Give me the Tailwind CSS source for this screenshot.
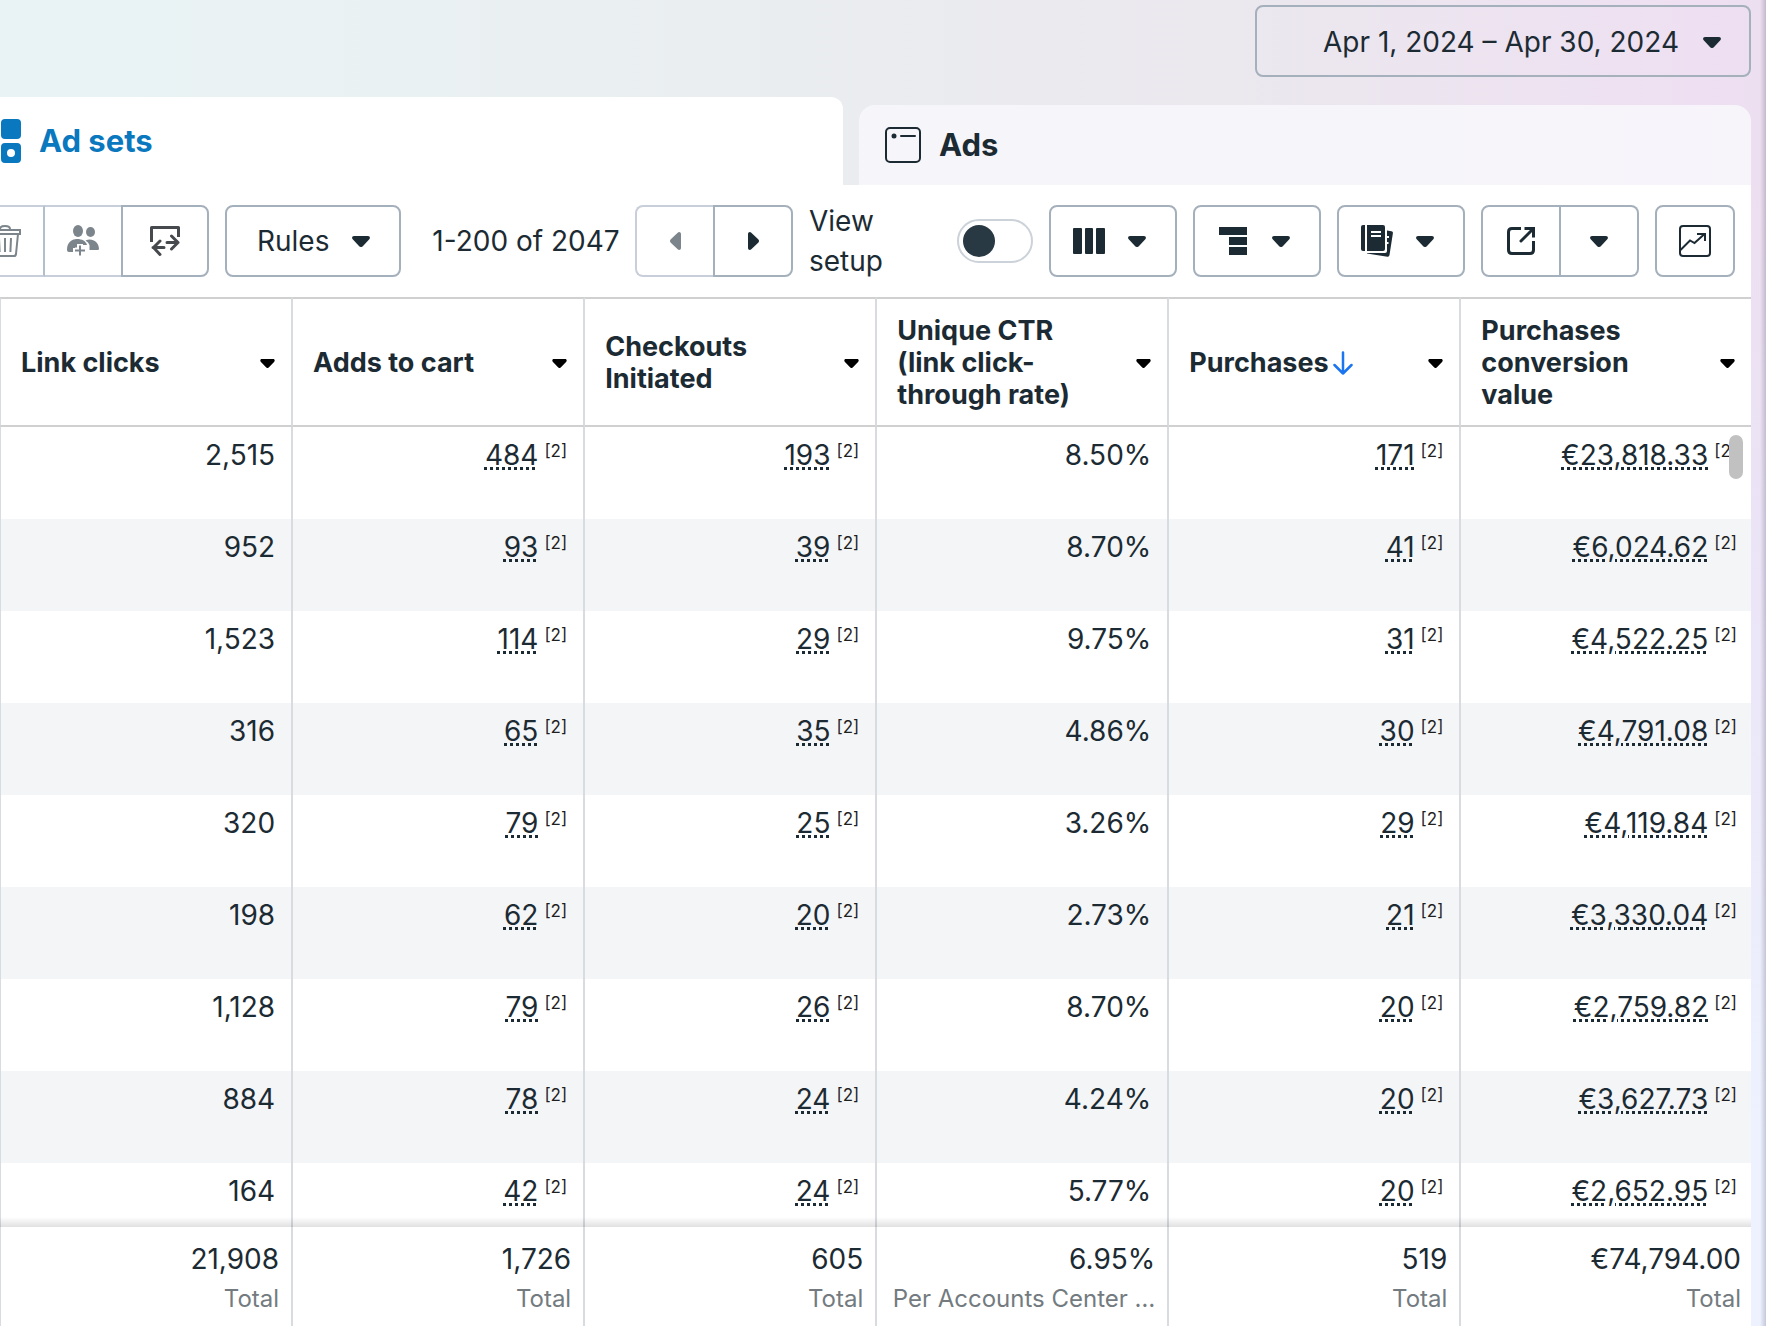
<!DOCTYPE html>
<html lang="en">
<head>
<meta charset="utf-8">
<title>Ads Manager</title>
<script src="https://cdn.jsdelivr.net/npm/@tailwindcss/browser@4"></script>
</head>
<body class="bg-[#eaebf0] font-['Inter',sans-serif] text-[#1c2b33]">
<svg class="hidden">
  <symbol id="caret" viewBox="0 0 18 11"><path d="M2 0h14c1.800 0 2.600 2 1.300 3.300l-6.500 6.900c-1 1.100-2.600 1.100-3.600 0L.7 3.300C-.6 2 .2 0 2 0z"/></symbol>
</svg>
<div class="flex h-screen flex-col overflow-hidden bg-[linear-gradient(270deg,rgba(40,30,60,0.2),transparent_6px),linear-gradient(180deg,transparent_14%,#ebe5f7_45%,#edf2fe_85%),linear-gradient(90deg,#e9f3f5_0%,#eaf1f2_24%,#eaedf0_45%,#ebe8ee_70%,#eee0f2_96%,#ecdff0_100%)] pr-[15px]">
  <header class="flex justify-end pt-[5px] pb-5">
    <button class="flex h-[72px] w-[496px] items-center justify-end gap-6 rounded-lg border-2 border-[#a4b0bc] pt-0.5 pr-7 text-[28px]">
      Apr 1, 2024 – Apr 30, 2024
      <svg class="h-[11px] w-[18px] fill-current"><use href="#caret"/></svg>
    </button>
  </header>
  <nav class="flex items-end gap-4">
    <a href="#" class="flex h-[88px] w-[843px] items-center gap-[18px] rounded-tr-xl bg-white text-[31px] font-bold text-[#0a78be]">
      <svg class="h-11 w-[21px]" viewBox="0 0 21 44" fill="currentColor"><rect x="1" width="20" height="20" rx="4"/><path fill-rule="evenodd" d="M5 24h12a4 4 0 0 1 4 4v12a4 4 0 0 1-4 4H5a4 4 0 0 1-4-4V28a4 4 0 0 1 4-4zm6 6a4 4 0 1 0 0 8 4 4 0 0 0 0-8z"/></svg>
      Ad sets
    </a>
    <a href="#" class="flex h-20 flex-1 items-center gap-[18px] rounded-t-2xl bg-[#f9f9fc]/80 pl-[26px] text-[31px] font-bold">
      <svg class="size-9" viewBox="0 0 36 36" fill="none" stroke="currentColor" stroke-width="2"><rect x="1" y="1" width="34" height="34" rx="4"/><circle cx="9" cy="9" r="2.500" fill="currentColor" stroke="none"/><path d="M16 9h14" stroke-linecap="round"/></svg>
      Ads
    </a>
  </nav>
  <main class="flex min-h-0 flex-1 flex-col bg-white">
    <div class="flex h-28 shrink-0 items-center gap-4 pr-4 text-[28px]">
      <div class="-ml-[35px] flex h-[72px]">
        <button aria-label="Delete" class="flex w-20 items-center justify-center border-2 border-[#c8cfda] border-r-[#b3bfcb] text-[#7b858b]">
          <svg class="size-8" viewBox="0 0 32 32" fill="none" stroke="currentColor" stroke-width="2"><path d="M1 5h30v4H1zM3 9l2 20q.3 2 2 2h18q1.700 0 2-2l2-20M11 4q0-3 5-3t5 3M10 13l.6 14M16 13v14M22 13l-.6 14"/></svg>
        </button>
        <button aria-label="Create audience" class="flex w-[76px] items-center justify-center border-y-2 border-[#c8cfda] text-[#7b858b]">
          <svg class="size-8" viewBox="0 0 32 32" fill="currentColor"><ellipse cx="11" cy="6" rx="5" ry="6"/><ellipse cx="23.500" cy="7" rx="4.500" ry="5"/><path d="M0 25c0-7 4-11 10-11 5 0 9 2 10 6h-4v-1h-6v4H6v4H2q-2 0-2-2zM18.500 15.500c6-3 13.500 1 13.500 8.500q0 1-1.500 1H22.500v-5q-1-3-4-4.500z"/><path d="M13 20.500v10M8 25.500h10" stroke="#fff" stroke-width="6"/><path d="M13 20.500v10M8 25.500h10" stroke="currentColor" stroke-width="2"/></svg>
        </button>
        <button aria-label="Export or import" class="flex w-[88px] items-center justify-center rounded-r-lg border-2 border-[#a4b0bc] text-[#46494d]">
          <svg class="size-8" viewBox="0 0 32 32" fill="none" stroke="currentColor" stroke-width="3" stroke-linecap="round" stroke-linejoin="round"><path stroke-linecap="butt" d="M2.500 17V2.500h27V12"/><path d="M18 17.500h11M22.500 11l6.500 6.500-6.500 6.500M15 22.500H4M11 16l-6.500 6.500L11 29.500"/></svg>
        </button>
      </div>
      <button class="flex h-[72px] w-44 items-center justify-between rounded-lg border-2 border-[#a4b0bc] pr-[29px] pl-[30px]">Rules
        <svg class="h-[11px] w-[18px] fill-current"><use href="#caret"/></svg>
      </button>
      <span class="flex w-[202px] justify-center pl-4 whitespace-nowrap">1-200 of 2047</span>
      <div class="flex h-[72px]">
        <button aria-label="Previous page" class="flex w-[78px] items-center justify-center rounded-l-lg border-2 border-r-0 border-[#c8cfda] text-[#7b858b]">
          <svg class="h-[18px] w-[11px]" viewBox="0 0 11 18" fill="currentColor"><path d="M11 2v14c0 1.800-2 2.600-3.300 1.300L.8 10.800c-1.100-1-1.100-2.600 0-3.600L7.700.7C9-.6 11 .2 11 2z"/></svg>
        </button>
        <button aria-label="Next page" class="flex w-20 items-center justify-center rounded-r-lg border-2 border-[#a4b0bc]">
          <svg class="h-[18px] w-[11px]" viewBox="0 0 11 18" fill="currentColor"><path d="M0 2v14c0 1.800 2 2.600 3.300 1.300l6.900-6.500c1.100-1 1.100-2.600 0-3.600L3.300.7C2-.6 0 .2 0 2z"/></svg>
        </button>
      </div>
      <label for="view-setup" class="flex-1 leading-10">View<br>setup</label>
      <input id="view-setup" type="checkbox" role="switch" class="h-11 w-19 shrink-0 appearance-none rounded-full border-2 border-[#cbd2d9] before:m-1 before:block before:size-8 before:rounded-full before:bg-[#283943]">
      <button aria-label="Columns" class="flex h-[72px] w-32 items-center justify-between rounded-lg border-2 border-[#a4b0bc] pr-[29px] pl-[22px]">
        <svg class="h-[26px] w-8" viewBox="0 0 32 26" fill="currentColor"><rect width="9" height="26" rx="1"/><rect x="12" width="8" height="26" rx="1"/><rect x="23" width="9" height="26" rx="1"/></svg>
        <svg class="h-[11px] w-[18px] fill-current"><use href="#caret"/></svg>
      </button>
      <button aria-label="Breakdown" class="flex h-[72px] w-32 items-center justify-between rounded-lg border-2 border-[#a4b0bc] pr-[29px] pl-6">
        <svg class="size-7" viewBox="0 0 28 28" fill="currentColor"><path d="M0 0h28v8H0zM10 10h18v8H10zM10 20h18v8H10z"/></svg>
        <svg class="h-[11px] w-[18px] fill-current"><use href="#caret"/></svg>
      </button>
      <button aria-label="Reports" class="flex h-[72px] w-32 items-center justify-between rounded-lg border-2 border-[#a4b0bc] pr-[29px] pl-[22px]">
        <svg class="size-8" viewBox="0 0 32 32" fill="currentColor"><path d="M2 0h2v26H2q-2 0-2-2V2q0-2 2-2zM6 0h16q2 0 2 2v22q0 2-2 2H6z"/><path d="M26 5.500l4.500.7q1.700.3 1.400 2L28.500 30q-.3 2-2 1.800L6 28.500V28h18q2 0 2-2z"/><path d="M10 7h10M10 11h10M25 12h3M25 18h2.500" stroke="#fff" stroke-width="2"/></svg>
        <svg class="h-[11px] w-[18px] fill-current"><use href="#caret"/></svg>
      </button>
      <div class="flex h-[72px]">
        <button aria-label="Export" class="flex w-20 items-center justify-center rounded-l-lg border-2 border-[#a4b0bc]">
          <svg class="size-7" viewBox="0 0 28 28" fill="none" stroke="currentColor" stroke-width="3"><path d="M14 1.500H5Q1.500 1.500 1.500 5v18q0 3.500 3.500 3.500h18q3.500 0 3.500-3.500V14M17.500 1.500h9v9"/><path d="M26 2L14 14" stroke-linecap="round"/></svg>
        </button>
        <button aria-label="Export options" class="flex w-[78px] items-center justify-center rounded-r-lg border-2 border-l-0 border-[#a4b0bc]">
          <svg class="h-[11px] w-[18px] fill-current"><use href="#caret"/></svg>
        </button>
      </div>
      <button aria-label="Charts" class="flex h-[72px] w-20 items-center justify-center rounded-lg border-2 border-[#a4b0bc]">
        <svg class="size-8" viewBox="0 0 32 32" fill="none" stroke="currentColor" stroke-width="2"><rect x="1" y="1" width="30" height="30" rx="3"/><path d="M1.500 25l9.500-9.500 4.500 2.500L25.500 9M18 9h8v7"/></svg>
      </button>
    </div>
    <div class="relative min-h-0 flex-1 overflow-hidden">
      <table class="w-full table-fixed border-separate border-spacing-0">
        <colgroup><col class="w-[16.74%]"><col class="w-[16.68%]"><col class="w-[16.68%]"><col class="w-[16.68%]"><col class="w-[16.68%]"><col></colgroup>
        <thead id="head"></thead>
        <tbody id="rows"></tbody>
      </table>
      <div class="absolute top-[138px] right-2 h-11 w-3.5 rounded-full bg-[#c1c1c1]"></div>
      <div class="absolute inset-x-0 bottom-0 h-2.5 bg-linear-to-b from-black/0 to-black/12"></div>
    </div>
    <table class="w-full table-fixed border-separate border-spacing-0">
      <colgroup><col class="w-[16.74%]"><col class="w-[16.68%]"><col class="w-[16.68%]"><col class="w-[16.68%]"><col class="w-[16.68%]"><col></colgroup>
      <tbody id="totals"></tbody>
    </table>
  </main>
</div>
<script>
  const edge = i => (i === 0 ? 'border-l' : '') + (i < 5 ? ' border-r-2' : '') + ' border-[#d8dce0]';
  const columns = ['Link clicks', 'Adds to cart', 'Checkouts Initiated', 'Unique CTR (link click-through rate)', 'Purchases', 'Purchases conversion value'];
  const sortArrow = '<svg class="inline h-6 w-5 ml-1 -mt-1" viewBox="0 0 20 24" fill="none" stroke="#1b74f0" stroke-width="2.500" stroke-linecap="round" stroke-linejoin="round"><path d="M10 1.500v21M1.500 14l8.500 8.500 8.500-8.500"/></svg>';
  document.getElementById('head').innerHTML = '<tr>' + columns.map((c, i) =>
    `<th scope="col" class="${edge(i)} h-[130px] border-y-2 border-y-[#d0d0d0] p-0 pt-0.5 pl-5 pr-4 text-left align-middle"><div class="flex items-center justify-between"><span class="${i === 4 ? 'whitespace-nowrap' : 'w-[190px]'} text-[27px] leading-8 font-bold">${c}${i === 4 ? sortArrow : ''}</span><svg class="h-[9px] w-[15px] shrink-0" viewBox="0 0 18 11" fill="#000"><use href="#caret"/></svg></div></th>`).join('') + '</tr>';
  const rows = [
    ['2,515', '484', '193', '8.50%', '171', '€23,818.33'],
    ['952', '93', '39', '8.70%', '41', '€6,024.62'],
    ['1,523', '114', '29', '9.75%', '31', '€4,522.25'],
    ['316', '65', '35', '4.86%', '30', '€4,791.08'],
    ['320', '79', '25', '3.26%', '29', '€4,119.84'],
    ['198', '62', '20', '2.73%', '21', '€3,330.04'],
    ['1,128', '79', '26', '8.70%', '20', '€2,759.82'],
    ['884', '78', '24', '4.24%', '20', '€3,627.73'],
    ['164', '42', '24', '5.77%', '20', '€2,652.95']
  ];
  document.getElementById('rows').innerHTML = rows.map((r, n) => `<tr class="${n % 2 ? 'bg-[#f4f5f7]' : ''}">` + r.map((v, i) =>
    `<td class="${edge(i)} h-[92px] p-0 pt-2.5 ${i === 5 ? 'pr-3.5' : 'pr-4'} text-right align-top text-[28px] leading-9">` + (i === 0 || i === 3 ? v :
    `<div class="flex justify-end gap-1.5"><span class="underline decoration-dotted decoration-3 underline-offset-2">${v}</span><span class="text-[17px] leading-7 text-[#1f1f1f]">[2]</span></div>`) + '</td>').join('') + '</tr>').join('');
  const totals = [['21,908', 'Total'], ['1,726', 'Total'], ['605', 'Total'], ['6.95%', 'Per Accounts Center …'], ['519', 'Total'], ['€74,794.00', 'Total']];
  document.getElementById('totals').innerHTML = '<tr>' + totals.map(([v, l], i) =>
    `<td class="${edge(i)} h-[99px] p-0 pt-3 ${i === 5 ? 'pr-2.5' : 'pr-3'} text-right align-top"><div class="text-[28px] leading-10">${v}</div><div class="whitespace-nowrap text-[24px] leading-10 text-[#737b80]">${l}</div></td>`).join('') + '</tr>';
</script>
</body>
</html>
